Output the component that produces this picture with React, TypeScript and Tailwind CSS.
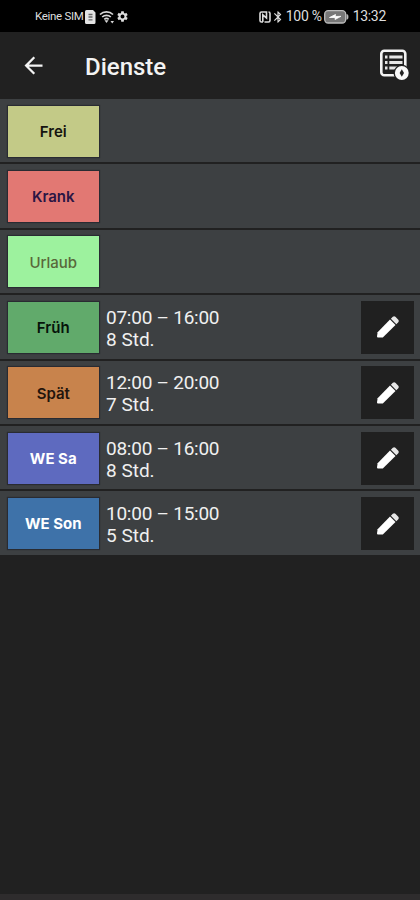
import { MdArrowBack, MdBluetooth, MdSettings } from 'react-icons/md'

type Shift = {
  name: string
  chip: string
  time?: string
  hours?: string
}

const shifts: Shift[] = [
  { name: 'Frei', chip: 'bg-[#c3ca87] text-[#151510] font-semibold' },
  { name: 'Krank', chip: 'bg-[#e27873] text-[#2a1544] font-semibold' },
  { name: 'Urlaub', chip: 'bg-[#9df29e] text-[#59683a] font-medium' },
  { name: 'Früh', chip: 'bg-[#61aa6b] text-[#06140a] font-semibold', time: '07:00 – 16:00', hours: '8 Std.' },
  { name: 'Spät', chip: 'bg-[#c8834c] text-[#23150c] font-semibold', time: '12:00 – 20:00', hours: '7 Std.' },
  { name: 'WE Sa', chip: 'bg-[#5e6abf] text-white font-bold', time: '08:00 – 16:00', hours: '8 Std.' },
  { name: 'WE Son', chip: 'bg-[#3e72a9] text-white font-bold', time: '10:00 – 15:00', hours: '5 Std.' },
]

function SimIcon() {
  return (
    <svg width="11" height="14" viewBox="0 0 11 14">
      <path d="M1.500 0H8l2.500 2.500v10a1.500 1.500 0 0 1-1.500 1.500h-7.500A1.500 1.500 0 0 1 0 12.500v-11A1.500 1.500 0 0 1 1.500 0z" fill="#e4e4e4" />
      <path d="M3.500 4.500h4M3.500 7h4M3.500 9.800h4" stroke="#666" strokeWidth="1.300" />
    </svg>
  )
}

function WifiIcon() {
  return (
    <svg width="16" height="14" viewBox="0 0 16 14" fill="none" stroke="#d8d8d8" strokeWidth="1.700">
      <path d="M1 4.500c3.600-3.600 9.400-3.600 13 0M3.200 7c2.400-2.300 6.200-2.300 8.600 0M5.300 9.300c1.300-1.200 3.100-1.200 4.400 0" />
      <path d="M5.500 10.200h4L7.500 13z" fill="#d8d8d8" stroke="none" />
      <path d="M11.500 11h3.500l-1.750 2.500z" fill="#d8d8d8" stroke="none" />
    </svg>
  )
}

function NfcIcon() {
  return (
    <svg width="12" height="12" viewBox="0 0 12 12" fill="none" stroke="#dcdcdc" strokeWidth="1.600">
      <path d="M4 11H2.500A1.500 1.500 0 0 1 1 9.500v-7A1.500 1.500 0 0 1 2.500 1H7.500v6L3.800 3.800V11M5.500 11h4A1.500 1.500 0 0 0 11 9.500v-7A1.500 1.500 0 0 0 9.500 1" />
    </svg>
  )
}

function BatteryIcon() {
  return (
    <svg width="25" height="14" viewBox="0 0 25 14">
      <rect x="0.700" y="0.700" width="21" height="12.300" rx="3.500" fill="#777" stroke="#bdbdbd" strokeWidth="1.300" />
      <path d="M23 4.500c1.300.5 1.300 4.300 0 4.800z" fill="#bdbdbd" stroke="#bdbdbd" />
      <path d="M5.500 7.500l6-3-.3 2 5.800-.2-6 3.200.3-2z" fill="#fff" stroke="#fff" strokeWidth="0.800" />
    </svg>
  )
}

function ListAddIcon() {
  return (
    <svg width="30" height="32" viewBox="0 0 30 32" fill="none">
      <rect x="2.300" y="1.800" width="24" height="24.500" rx="3" stroke="#f4f4f4" strokeWidth="2.600" />
      <path d="M6 8h2.500M6 13.500h2.500M6 19h2.500M10.300 8H23.500M10.300 13.500H23.500M10.300 19H18" stroke="#e6e6e6" strokeWidth="3" />
      <circle cx="22.800" cy="24" r="8.300" fill="#222" />
      <circle cx="22.800" cy="24" r="6.900" fill="#fafafa" />
      <path d="M22.800 20.200l2.200 3.800-2.200 3.800-2.200-3.800z" fill="#222" />
    </svg>
  )
}

function PencilIcon() {
  return (
    <svg width="24" height="24" viewBox="0 0 24 24" fill="#fff">
      <path d="M1 21.500l.6-4.300L14 4.600l5.500 5.500L6.800 22.400H2q-1 0-1-.9z" />
      <path d="M14.900 3.700l1.900-1.900q1.400-1.200 2.600 0l2.900 2.900q1.100 1.200 0 2.500l-2 2z" fill="#e6e6e6" />
    </svg>
  )
}

function ShiftRow({ shift }: { shift: Shift }) {
  return (
    <li className="flex h-[63.4px] items-center bg-[#3d4042] pl-2 pr-[6px] pt-px">
      <div
        className={`flex h-[51px] w-[90.5px] items-center justify-center pt-[2px] font-['Inter',sans-serif] text-[15px] shadow-[0_0_1px_1px_#292b32] ${shift.chip}`}
      >
        {shift.name}
      </div>
      {shift.time && (
        <>
          <div className="ml-[7.5px] flex-1 pt-[3px] text-[19px] leading-[22px] text-[#f0f0f0]">
            <p className="tracking-[-0.250px]">{shift.time}</p>
            <p>{shift.hours}</p>
          </div>
          <button className="flex h-[53px] w-[53px] items-center justify-center bg-[#202020]" aria-label="Bearbeiten">
            <PencilIcon />
          </button>
        </>
      )}
    </li>
  )
}

export default function App() {
  return (
    <div className="flex h-[900px] w-[420px] flex-col overflow-hidden bg-[#212121] font-['Roboto',sans-serif]">
      <div className="flex h-8 shrink-0 items-center justify-between bg-black pl-[35px] pr-[34px] pt-px text-[#dedede]">
        <div className="flex items-center">
          <span className="w-[50px] whitespace-nowrap text-[11.500px] tracking-[-0.300px]">Keine SIM</span>
          <SimIcon />
          <span className="ml-[3px] flex">
            <WifiIcon />
          </span>
          <MdSettings className="ml-px size-[13px]" />
        </div>
        <div className="flex items-center text-[14px]">
          <NfcIcon />
          <MdBluetooth className="size-[14px]" />
          <span className="ml-px mr-[2px] whitespace-nowrap tracking-[-0.300px]">100 %</span>
          <BatteryIcon />
          <span className="ml-[4px] tracking-[-0.300px]">13:32</span>
        </div>
      </div>

      <header className="flex h-[67px] shrink-0 items-center pl-[20px] pr-[11px] text-[#f3f3f3]">
        <MdArrowBack className="size-[27px]" />
        <h1 className="ml-[38px] flex-1 pt-[2px] text-[24px] font-medium">Dienste</h1>
        <span className="-mt-px flex">
          <ListAddIcon />
        </span>
      </header>

      <ul className="flex flex-1 flex-col gap-[2px]">
        {shifts.map((shift) => (
          <ShiftRow key={shift.name} shift={shift} />
        ))}
      </ul>

      <div className="h-[6px] shrink-0 bg-[#2e2c2d]" />
    </div>
  )
}
